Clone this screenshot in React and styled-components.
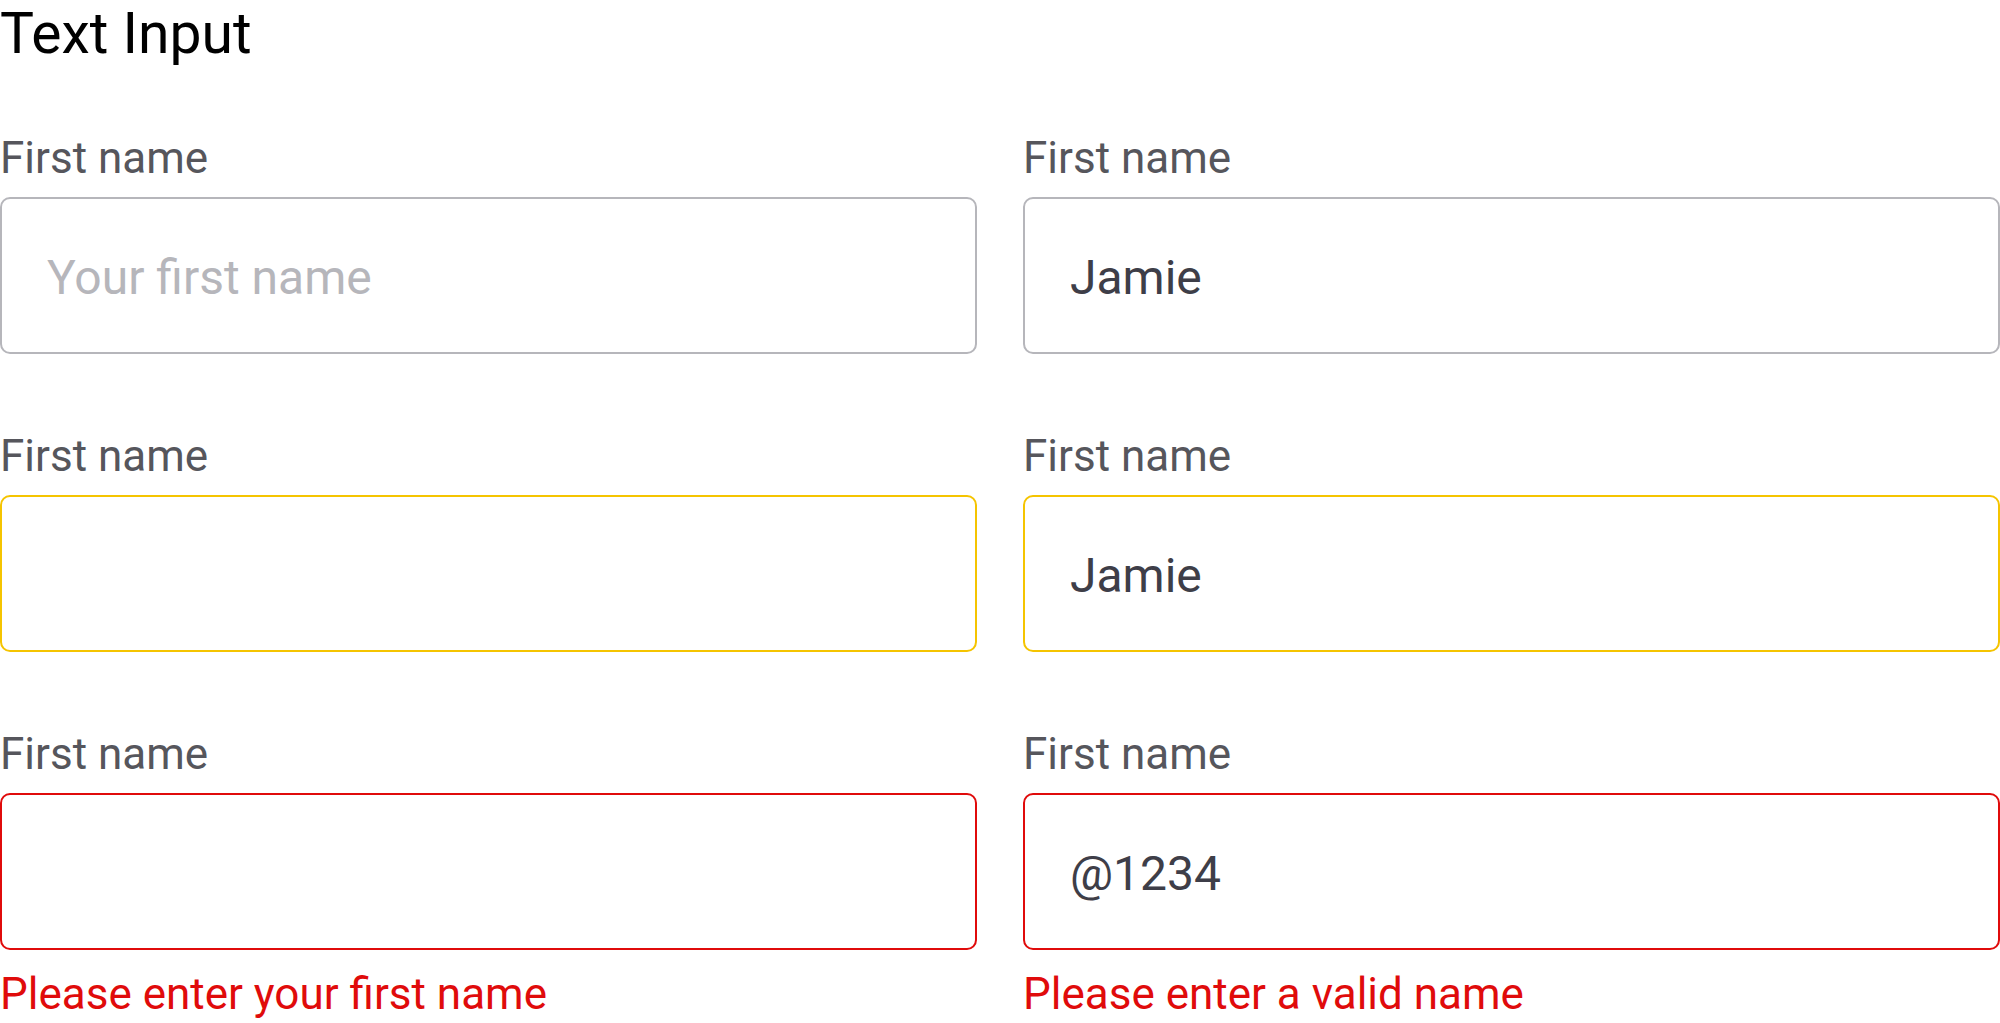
import React from "react";
import styled, { createGlobalStyle } from "styled-components";

const GlobalStyle = createGlobalStyle`
  html, body {
    margin: 0;
    padding: 0;
    background: #ffffff;
  }
  body {
    font-family: Roboto, "Liberation Sans", Arial, sans-serif;
  }
  * { box-sizing: border-box; }
`;

const Page = styled.main`
  width: 2000px;
  padding-top: 2px;
  display: flex;
  flex-direction: column;
  gap: 66px;
`;

const Title = styled.h1`
  margin: 0;
  font-size: 57px;
  line-height: 64px;
  font-weight: 400;
  color: #000000;
`;

const Grid = styled.div`
  display: grid;
  grid-template-columns: 977px 977px;
  column-gap: 46px;
  row-gap: 76px;
  align-items: start;
`;

const Field = styled.label`
  display: flex;
  flex-direction: column;
`;

const Label = styled.span`
  font-size: 44px;
  line-height: 52px;
  color: #56565c;
  margin-bottom: 13px;
`;

const borderColors = {
  default: "#b6b6bb",
  focus: "#f5c400",
  error: "#e00b0b",
};

const Input = styled.input`
  width: 100%;
  height: 157px;
  margin: 0;
  padding: 4px 45px 0;
  border: 2px solid ${(p) => borderColors[p.$state]};
  border-radius: 10px;
  background: #ffffff;
  font-family: Roboto, "Liberation Sans", Arial, sans-serif;
  font-size: 48px;
  line-height: 56px;
  color: #3e3e48;
  outline: none;

  &::placeholder {
    color: #b6b6bb;
    opacity: 1;
  }
`;

const ErrorText = styled.span`
  margin-top: 18px;
  font-size: 44px;
  line-height: 52px;
  color: #e00b0b;
`;

const fields = [
  { state: "default", placeholder: "Your first name", value: "" },
  { state: "default", value: "Jamie" },
  { state: "focus", value: "" },
  { state: "focus", value: "Jamie" },
  { state: "error", value: "", error: "Please enter your first name" },
  { state: "error", value: "@1234", error: "Please enter a valid name" },
];

export default function App() {
  return (
    <>
      <GlobalStyle />
      <Page>
        <Title>Text Input</Title>
        <Grid>
          {fields.map((f, i) => (
            <Field key={i}>
              <Label>First name</Label>
              <Input
                $state={f.state}
                placeholder={f.placeholder}
                defaultValue={f.value}
                readOnly
              />
              {f.error && <ErrorText>{f.error}</ErrorText>}
            </Field>
          ))}
        </Grid>
      </Page>
    </>
  );
}
